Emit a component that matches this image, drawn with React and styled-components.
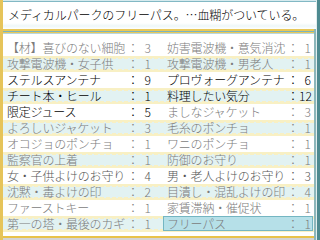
import React from "react";
import styled, { createGlobalStyle } from "styled-components";

const items = [
    ["【材】喜びのない細胞", "3", "off"], ["妨害電波機・意気消沈", "1", "off"],
    ["攻撃電波機・女子供", "1", "off"], ["攻撃電波機・男老人", "1", "off"],
    ["ステルスアンテナ", "9", "on"], ["プロヴォーグアンテナ", "6", "on"],
    ["チート本・ヒール", "1", "on"], ["料理したい気分", "12", "on"],
    ["限定ジュース", "5", "on"], ["ましなジャケット", "3", "off"],
    ["よろしいジャケット", "3", "off"], ["毛糸のポンチョ", "1", "off"],
    ["オコジョのポンチョ", "1", "off"], ["ワニのポンチョ", "1", "off"],
    ["監察官の上着", "1", "off"], ["防御のお守り", "1", "off"],
    ["女・子供よけのお守り", "4", "mid"], ["男・老人よけのお守り", "3", "mid"],
    ["沈黙・毒よけの印", "2", "off"], ["目潰し・混乱よけの印", "4", "off"],
    ["ファーストキー", "1", "off"], ["家賃滞納・催促状", "1", "off"],
    ["第一の塔・最後のカギ", "1", "off"], ["フリーパス", "1", "off", true],
];

const rows = [];
for (let i = 0; i < items.length; i += 2) {
    rows.push([items[i], items[i + 1]]);
}

export default function App() {
    return (
        <>
        <GlobalStyle />
        <Frame>
            <Inner>
                <Header>
                    <p>メディカルパークのフリーパス。…血糊がついている。</p>
                </Header>
                <Divider />
                <List>
                    {rows.map((row, i) =>
                        <Row key={i} striped={i % 2 === 1}>
                            {row.map(([name, count, tone, selected]) =>
                                <Cell key={name} tone={tone} selected={selected}>
                                    <Name>{name}</Name>
                                    <Colon>：</Colon>
                                    <Count>{count}</Count>
                                </Cell>
                            )}
                        </Row>
                    )}
                </List>
            </Inner>
        </Frame>
        </>
    );
}

const GlobalStyle = createGlobalStyle`
    body{
        margin: 0;
        background-color: #FFFFFF;
        font-family: "Noto Sans CJK JP", "Noto Sans", sans-serif;
    }
`;

const Frame = styled.div`
    width: 320px;
    height: 240px;
    box-sizing: border-box;
    border-left: 3px solid #E6C45A;
    border-right: 3px solid #4E8A90;
    background-color: #FFFFFF;
    display: flex;
`;

const Inner = styled.div`
    flex: 1;
    display: flex;
    flex-direction: column;
    border-right: 1px solid #E2EEEE;
    box-shadow: inset -2px 0 0 #8CB6BA;
`;

const Header = styled.div`
    height: 29px;
    box-sizing: border-box;
    border-top: 1px solid #D6EAEE;
    box-shadow: inset 0 1px 0 #82B8C4;
    padding: 0 0 0 5px;
    display: flex;
    align-items: center;
    background: linear-gradient(to bottom, #FFFFFF 0, #FFFFFF 22px, #EEF7F8 25px, #FFFFFF 28px);

    p{
        margin: 0;
        font-size: 12px;
        line-height: 16px;
        font-weight: 300;
        color: #000000;
        white-space: nowrap;
        letter-spacing: -0.1px;
    }
`;

const Divider = styled.div`
    height: 5px;
    margin-right: 2px;
    background: linear-gradient(to bottom,
        #E8C858 0, #E8C858 2px,
        #7AB4C0 2px, #7AB4C0 3px,
        #E8C858 3px, #E8C858 4px,
        #B8D8DE 4px, #B8D8DE 5px);
`;

const List = styled.div`
    flex: 1;
    padding-top: 6px;
    margin-right: 2px;
    display: flex;
    flex-direction: column;
    border-bottom: 2px solid #E8C24A;
    box-shadow: 0 2px 0 #D4D4D4;
    margin-bottom: 2px;
`;

const Row = styled.div`
    height: 16px;
    display: grid;
    grid-template-columns: 154px 150px;
    column-gap: 6px;
    background-color: ${(props) => props.striped ? "#E2F2F2" : "transparent"};
    background-image: ${(props) => props.striped
        ? "radial-gradient(circle at 3px 0, #F8F0C4 3px, transparent 3.5px), radial-gradient(circle at 3px 16px, #F8F0C4 3px, transparent 3.5px)"
        : "none"};
    background-size: 6px 16px;
`;

const toneColor = { on: "#000000", mid: "#555555", off: "#7C7C7C" };

const Cell = styled.div`
    display: flex;
    align-items: center;
    box-sizing: border-box;
    height: ${(props) => props.selected ? "15px" : "16px"};
    font-size: 12px;
    line-height: 16px;
    font-weight: 300;
    white-space: nowrap;
    color: ${(props) => toneColor[props.tone]};
    background-color: ${(props) => props.selected ? "#B6E0E8" : "transparent"};
    border: ${(props) => props.selected ? "1px solid #74B6C2" : "none"};
    padding-left: ${(props) => props.selected ? "3px" : "4px"};
`;

const Name = styled.span`
    flex: 0 0 120px;
    letter-spacing: -0.2px;
`;

const Colon = styled.span`
    flex: 0 0 12px;
    text-align: center;
`;

const Count = styled.span`
    flex: 0 0 12px;
    text-align: right;
`;
